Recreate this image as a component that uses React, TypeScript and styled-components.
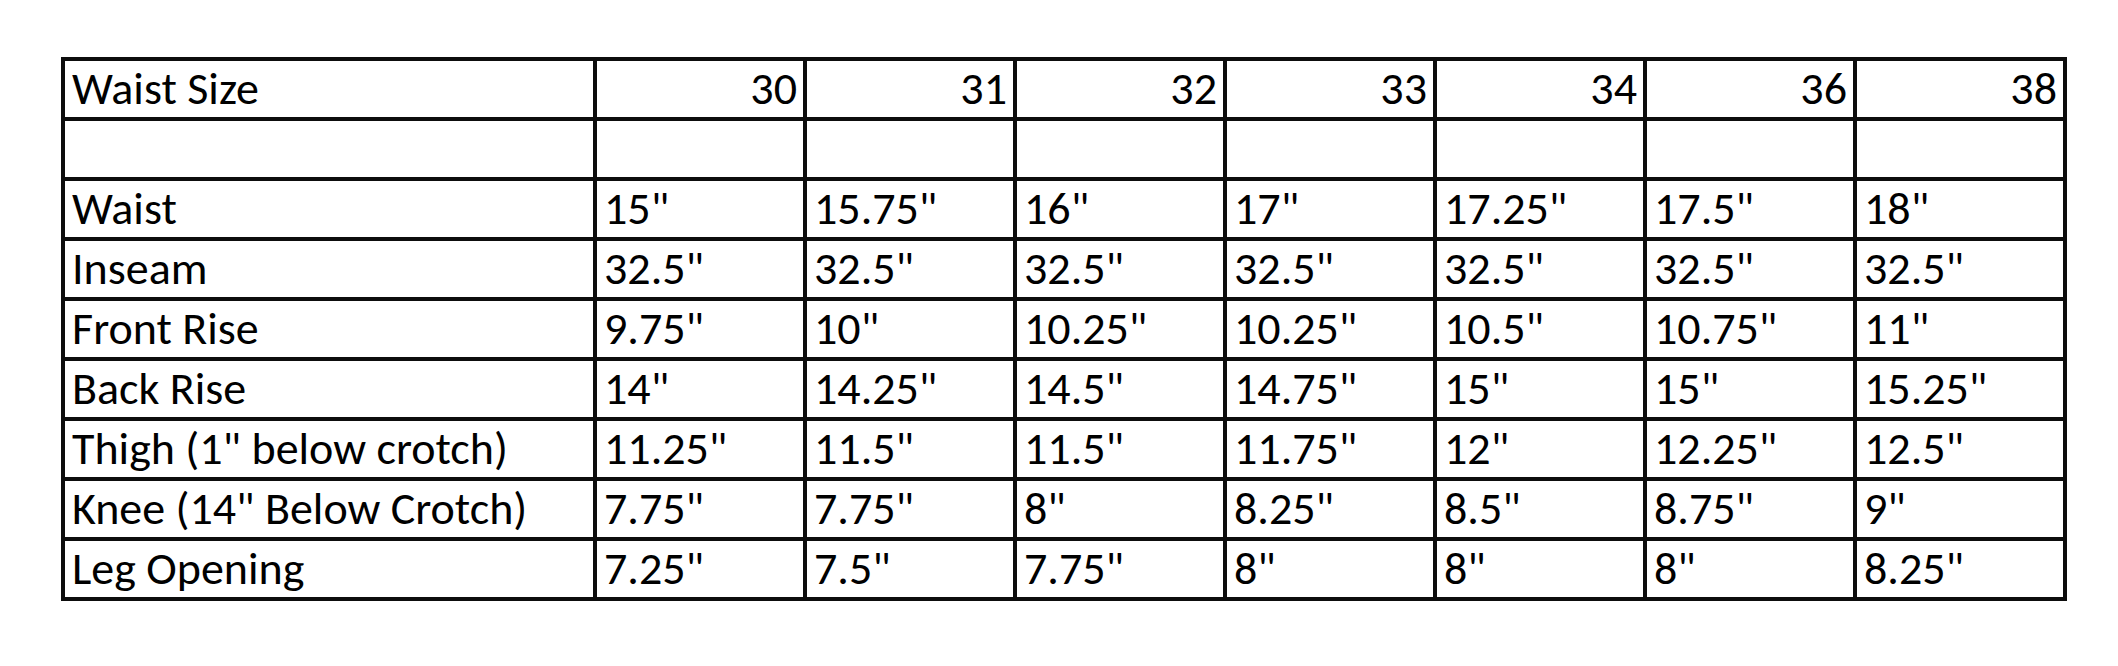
import React from 'react';
import styled, { createGlobalStyle } from 'styled-components';

const GlobalStyle = createGlobalStyle`
  html, body {
    margin: 0;
    padding: 0;
    background: #fff;
  }
  body {
    font-family: Calibri, Carlito, 'Open Sans', 'Liberation Sans', sans-serif;
    color: #000;
  }
`;

const Page = styled.div`
  width: 2118px;
  height: 666px;
  padding: 57px 0 0 61px;
  box-sizing: border-box;
`;

const Grid = styled.div`
  display: grid;
  grid-template-columns: 528px repeat(7, 206px);
  grid-auto-rows: 56px;
  gap: 4px;
  padding: 4px;
  background: #0d0d0d;
  width: max-content;
`;

const Cell = styled.div<{ $align?: 'left' | 'right' }>`
  background: #fff;
  font-size: 46px;
  line-height: 55px;
  white-space: nowrap;
  overflow: hidden;
  text-align: ${(p) => p.$align ?? 'left'};
  padding: ${(p) => (p.$align === 'right' ? '0 6px 0 0' : '0 0 0 7px')};
`;

const sizes = ['30', '31', '32', '33', '34', '36', '38'];

const rows: [string, string[]][] = [
  ['', ['', '', '', '', '', '', '']],
  ['Waist', ['15"', '15.75"', '16"', '17"', '17.25"', '17.5"', '18"']],
  ['Inseam', ['32.5"', '32.5"', '32.5"', '32.5"', '32.5"', '32.5"', '32.5"']],
  ['Front Rise', ['9.75"', '10"', '10.25"', '10.25"', '10.5"', '10.75"', '11"']],
  ['Back Rise', ['14"', '14.25"', '14.5"', '14.75"', '15"', '15"', '15.25"']],
  ['Thigh (1" below crotch)', ['11.25"', '11.5"', '11.5"', '11.75"', '12"', '12.25"', '12.5"']],
  ['Knee (14" Below Crotch)', ['7.75"', '7.75"', '8"', '8.25"', '8.5"', '8.75"', '9"']],
  ['Leg Opening', ['7.25"', '7.5"', '7.75"', '8"', '8"', '8"', '8.25"']],
];

const App: React.FC = () => {
  return (
    <>
      <GlobalStyle />
      <Page>
        <Grid>
          <Cell>Waist Size</Cell>
          {sizes.map((s) => (
            <Cell key={s} $align="right">
              {s}
            </Cell>
          ))}
          {rows.map(([label, values], i) => (
            <React.Fragment key={i}>
              <Cell>{label}</Cell>
              {values.map((v, j) => (
                <Cell key={j}>{v}</Cell>
              ))}
            </React.Fragment>
          ))}
        </Grid>
      </Page>
    </>
  );
};

export default App;
